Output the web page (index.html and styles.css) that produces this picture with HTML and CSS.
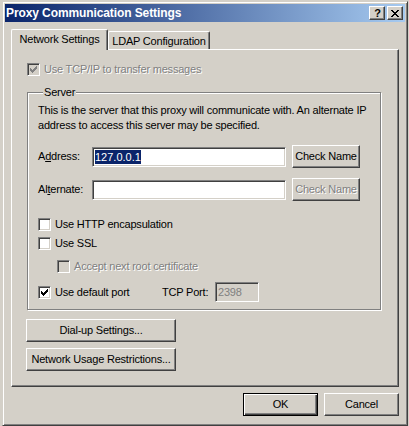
FILE: index.html
```html
<!DOCTYPE html>
<html>
<head>
<meta charset="utf-8">
<title>Proxy Communication Settings</title>
<link rel="stylesheet" href="styles.css">
</head>
<body>
<div class="window">
  <div class="titlebar">
    <span class="title">Proxy Communication Settings</span>
    <div class="caption-btns">
      <span class="cbtn help">?</span>
      <span class="cbtn close"><svg width="8" height="7" viewBox="0 0 8 7" shape-rendering="crispEdges"><path d="M0 0h2v1H0z M6 0h2v1H6z M1 1h2v1H1z M5 1h2v1H5z M2 2h4v1H2z M3 3h2v1H3z M2 4h4v1H2z M1 5h2v1H1z M5 5h2v1H5z M0 6h2v1H0z M6 6h2v1H6z" fill="#000"/></svg></span>
    </div>
  </div>

  <div class="tabs">
    <div class="tab active">Network Settings</div>
    <div class="tab">LDAP Configuration</div>
  </div>

  <div class="panel">
    <div class="check-row disabled">
      <span class="chk"><svg class="mark" width="7" height="7" viewBox="0 0 7 7" shape-rendering="crispEdges"><path d="M0 2h1v3H0z M1 3h1v3H1z M2 4h1v3H2z M3 3h1v3H3z M4 2h1v3H4z M5 1h1v3H5z M6 0h1v3H6z"/></svg></span>
      <span class="text">Use TCP/IP to transfer messages</span>
    </div>

    <fieldset class="group">
      <legend>Server</legend>
      <p class="desc">This is the server that this proxy will communicate with. An alternate IP<br>address to access this server may be specified.</p>

      <div class="field-row addr">
        <span class="flabel">A<u>d</u>dress:</span>
        <div class="edit"><span class="sel">127.0.0.1</span></div>
        <div class="btn check">Check Name</div>
      </div>

      <div class="field-row alt">
        <span class="flabel">Al<u>t</u>ernate:</span>
        <div class="edit"></div>
        <div class="btn check disabled"><span class="text">Check Name</span></div>
      </div>

      <div class="check-row http">
        <span class="chk"></span>
        <span class="text">Use HTTP encapsulation</span>
      </div>
      <div class="check-row ssl">
        <span class="chk"></span>
        <span class="text">Use SSL</span>
      </div>
      <div class="check-row accept disabled">
        <span class="chk"></span>
        <span class="text">Accept next root certificate</span>
      </div>
      <div class="check-row port-row">
        <span class="chk"><svg class="mark" width="7" height="7" viewBox="0 0 7 7" shape-rendering="crispEdges"><path d="M0 2h1v3H0z M1 3h1v3H1z M2 4h1v3H2z M3 3h1v3H3z M4 2h1v3H4z M5 1h1v3H5z M6 0h1v3H6z"/></svg></span>
        <span class="text port-text">Use default port</span>
        <span class="plabel">TCP Port:</span>
        <div class="edit port">2398</div>
      </div>
    </fieldset>

    <div class="btn wide dialup">Dial-up Settings...</div>
    <div class="btn wide netusage">Network Usage Restrictions...</div>
  </div>

  <div class="footer">
    <div class="btn action default">OK</div>
    <div class="btn action">Cancel</div>
  </div>
</div>
</body>
</html>
```

FILE: styles.css
```css
* { box-sizing: border-box; }

html, body {
  margin: 0;
  padding: 0;
}

body {
  width: 409px;
  height: 426px;
  overflow: hidden;
  background: #d4d0c8;
  font-family: "Liberation Sans", Arial, sans-serif;
  font-size: 11px;
  line-height: 13px;
  letter-spacing: -0.2px;
  color: #000;
}

.window {
  margin: 1px 0 0 2px;
  width: 406px;
  height: 425px;
  padding: 2px;
  background: #d4d0c8;
  border: 1px solid;
  border-color: #d4d0c8 #404040 #404040 #d4d0c8;
  box-shadow: inset 1px 1px #fff, inset -1px -1px #808080;
  display: flex;
  flex-direction: column;
}

/* Title bar */
.titlebar {
  flex: none;
  height: 18px;
  background: linear-gradient(to right, #0a246a, #a6caf0);
  display: flex;
  align-items: center;
  justify-content: space-between;
  padding: 0 2px 0 1px;
}

.title {
  color: #fff;
  font-weight: bold;
  font-size: 12px;
  letter-spacing: -0.1px;
  line-height: 18px;
}

.caption-btns {
  display: flex;
  gap: 2px;
}

.cbtn {
  width: 16px;
  height: 14px;
  background: #d4d0c8;
  border: 1px solid;
  border-color: #fff #404040 #404040 #fff;
  box-shadow: inset -1px -1px #808080;
  display: flex;
  align-items: center;
  justify-content: center;
}

.help {
  font-weight: bold;
  font-size: 11px;
  line-height: 12px;
  letter-spacing: 0;
  padding-left: 1px;
}

.close svg { display: block; }

/* Tabs */
.tabs {
  flex: none;
  margin: 7px 0 0 6px;
  height: 20px;
  display: flex;
  align-items: flex-end;
}

.tab {
  height: 18px;
  padding-top: 3px;
  text-align: center;
  border: 1px solid;
  border-bottom: 0;
  border-color: #fff #404040 #fff #fff;
  border-radius: 2px 2px 0 0;
  box-shadow: inset -1px 0 #808080;
  background: #d4d0c8;
}

.tab.active {
  width: 97px;
  height: 21px;
  margin-bottom: -1px;
  position: relative;
  z-index: 1;
}

.tab:not(.active) {
  width: 102px;
}

/* Panel */
.panel {
  flex: none;
  margin: 0 6px 0 6px;
  height: 338px;
  padding: 13px 0 0 15px;
  border: 1px solid;
  border-color: #fff #404040 #404040 #fff;
  box-shadow: inset -1px -1px #808080;
}

/* Checkboxes */
.check-row {
  display: flex;
  align-items: center;
  height: 13px;
}

.chk {
  flex: none;
  width: 13px;
  height: 13px;
  padding: 2px;
  border: 1px solid;
  border-color: #808080 #fff #fff #808080;
  box-shadow: inset 1px 1px #404040, inset -1px -1px #d4d0c8;
  background: #fff;
}

.chk .mark {
  display: block;
  fill: #000;
}

.check-row .text {
  margin-left: 4px;
  white-space: nowrap;
}

.disabled .chk { background: #d4d0c8; }
.disabled .chk .mark { fill: #808080; }

.disabled .text,
.btn.disabled .text {
  color: #808080;
  text-shadow: 1px 1px 0 #fff;
}

/* Group box */
.group {
  margin: 10px 0 0 0;
  width: 354px;
  min-width: 0;
  padding: 0 10px 7px 10px;
  border: 1px solid #808080;
  box-shadow: inset 1px 1px #fff, 1px 1px #fff;
}

.group legend {
  margin-left: 5px;
  padding: 0 1px;
  line-height: 13px;
  background: #d4d0c8;
}

.desc {
  margin: 4px 0 0 0;
  line-height: 15px;
  white-space: nowrap;
}

.field-row {
  display: flex;
  align-items: center;
  height: 23px;
}

.field-row.addr { margin-top: 12px; }
.field-row.alt { margin-top: 10px; }

.flabel {
  width: 54px;
  flex: none;
}

.edit {
  flex: none;
  width: 194px;
  height: 20px;
  padding: 0 2px;
  border: 1px solid;
  border-color: #808080 #fff #fff #808080;
  box-shadow: inset 1px 1px #404040, inset -1px -1px #d4d0c8;
  background: #fff;
  display: flex;
  align-items: center;
}

.sel {
  background: #0a246a;
  color: #fff;
  line-height: 14px;
  letter-spacing: 0;
}

.check-row.http { margin-top: 17px; }
.check-row.ssl { margin-top: 6px; }
.check-row.accept { margin-top: 10px; margin-left: 19px; }

.check-row.port-row {
  margin-top: 9px;
  height: 20px;
}

.port-text { width: 107px; flex: none; }

.plabel {
  width: 53px;
  flex: none;
}

.edit.port {
  width: 44px;
  background: #d4d0c8;
  color: #808080;
}

/* Buttons */
.btn {
  height: 23px;
  background: #d4d0c8;
  border: 1px solid;
  border-color: #fff #404040 #404040 #fff;
  box-shadow: inset -1px -1px #808080;
  display: flex;
  align-items: center;
  justify-content: center;
  white-space: nowrap;
}

.btn.check {
  flex: none;
  width: 68px;
  margin-left: 6px;
}

.btn.wide {
  width: 150px;
  margin-left: -1px;
}

.btn.dialup { margin-top: 9px; }
.btn.netusage { margin-top: 6px; }

.footer {
  flex: none;
  margin-top: 6px;
  padding-right: 6px;
  display: flex;
  justify-content: flex-end;
  gap: 6px;
}

.btn.action { width: 75px; }

.btn.default {
  border: 1px solid #000;
  box-shadow: inset 1px 1px #fff, inset -1px -1px #404040, inset -2px -2px #808080;
}
```
